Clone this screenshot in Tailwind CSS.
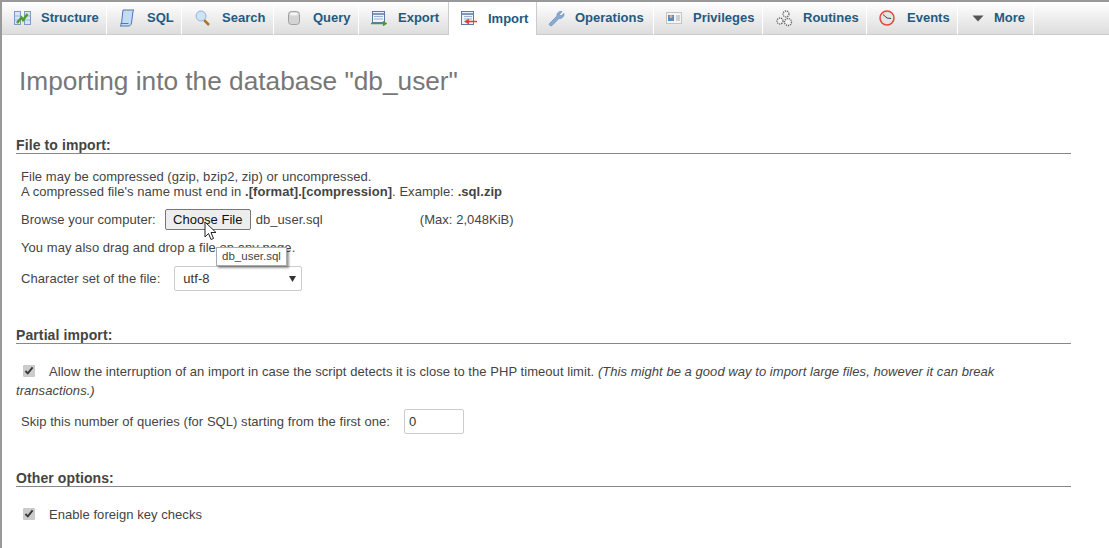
<!DOCTYPE html>
<html lang="en">
<head>
    <meta charset="UTF-8">
    <title>Import</title>
    <script src="https://cdn.jsdelivr.net/npm/@tailwindcss/browser@4"></script>
</head>
<body class="bg-white font-['Liberation_Sans',Arial,sans-serif] text-[13px] tracking-[0.05px] text-[#444] overflow-hidden">
<div class="relative h-[548px] w-[1109px] overflow-hidden border-t-2 border-l-2 border-[#999]">

    <!-- Tabs -->
    <nav class="flex h-[33px] bg-linear-to-b from-white to-[#dcdcdc] text-[13px] font-bold tracking-normal text-[#235a81]">
        <a class="flex w-[105px] items-center border-r border-b border-r-white border-b-[#ccc] pl-[12px]">
            <svg class="mr-[10px] shrink-0" width="17" height="16" viewBox="0 0 17 16"><rect x="0.500" y="1.500" width="6" height="13" fill="#d8e4f4" stroke="#7f9ac6"/><rect x="10.500" y="1.500" width="6" height="13" fill="#d8e4f4" stroke="#7f9ac6"/><path d="M1 6 H6 M1 10 H6 M11 6 H16 M11 10 H16" stroke="#9db4d8"/><path d="M3 13 L7.500 7.500 L9 10 L13.500 4" fill="none" stroke="#4f9a2d" stroke-width="2.400"/></svg>
            Structure
        </a>
        <a class="flex w-[75px] items-center border-r border-b border-r-white border-b-[#ccc] pl-[12px]">
            <svg class="mr-[12px] shrink-0" width="16" height="18" viewBox="0 0 16 18"><path d="M4 1 H15 C14.500 1.500 14 2 13.800 4 L12.500 14 C12 16 11 17 9 17 H1 C2 16 2.500 15 2.700 13 Z" fill="#c5dbf5" stroke="#4a78b8"/><path d="M1.500 14.500 H9.500" stroke="#4a78b8"/></svg>
            SQL
        </a>
        <a class="flex w-[92px] items-center border-r border-b border-r-white border-b-[#ccc] pl-[13px]">
            <svg class="mr-[12px] shrink-0" width="15" height="16" viewBox="0 0 15 16"><path d="M9 10 L14 15" stroke="#a8762c" stroke-width="2.500"/><circle cx="6" cy="6" r="5" fill="#cfe3f7" stroke="#94b4d4"/></svg>
            Search
        </a>
        <a class="flex w-[85px] items-center border-r border-b border-r-white border-b-[#ccc] pl-[14px]">
            <svg class="mr-[13px] shrink-0" width="12" height="14" viewBox="0 0 12 14"><rect x="0.500" y="0.500" width="11" height="13" rx="3" fill="#d4d4d4" stroke="#a0a0a0"/><ellipse cx="6" cy="3" rx="4" ry="1.500" fill="#f6f6f6"/></svg>
            Query
        </a>
        <a class="flex w-[90px] items-center border-r border-b border-r-[#ccc] border-b-[#ccc] pl-[12px]">
            <svg class="mr-[11px] shrink-0" width="16" height="15" viewBox="0 0 16 15"><rect x="1.500" y="0.500" width="12" height="11" fill="#eef3fa" stroke="#5a7ca8"/><path d="M2 3 H13" stroke="#5a7ca8" stroke-width="1.500"/><path d="M3 5.500 H12 M3 8 H12" stroke="#9ab2d0"/><path d="M0 12.500 H14 M12 10.500 L15 12.500 L12 14.500" fill="#4f9a2d" stroke="#4f9a2d" stroke-width="1.500"/></svg>
            Export
        </a>
        <a class="flex w-[88px] items-center border-r border-[#ccc] bg-white pl-[12px]">
            <svg class="mr-[11px] shrink-0" width="16" height="15" viewBox="0 0 16 15"><rect x="0.500" y="0.500" width="12" height="13" fill="#eef3fa" stroke="#5a7ca8"/><path d="M1 3 H12" stroke="#5a7ca8" stroke-width="1.500"/><path d="M3 5.500 H11 M3 8 H11" stroke="#9ab2d0"/><path d="M16 10.500 H6 M8 8.500 L4.500 10.500 L8 12.500" fill="#f4a0a0" stroke="#e0403c" stroke-width="1.500"/></svg>
            Import
        </a>
        <a class="flex w-[117px] items-center border-r border-b border-r-white border-b-[#ccc] pl-[11px]">
            <svg class="mr-[10px] shrink-0" width="17" height="17" viewBox="0 0 17 17"><path d="M1.500 13.500 L9 6 C8.500 3 11 1 14 1.500 L11.500 4.500 L13 6 L16 3.500 C16.500 6.500 13.500 9 11 8.500 L4 15.500 C2.500 16.500 0.500 15 1.500 13.500 Z" fill="#8aaad4" stroke="#6a8abc" stroke-width="0.700"/></svg>
            Operations
        </a>
        <a class="flex w-[109px] items-center border-r border-b border-r-white border-b-[#ccc] pl-[12px]">
            <svg class="mr-[11px] shrink-0" width="16" height="12" viewBox="0 0 16 12"><rect x="0.500" y="0.500" width="15" height="11" fill="#f4f4f4" stroke="#c4c4c4"/><rect x="2" y="3" width="6" height="6" fill="#5a8ac4"/><circle cx="5" cy="4.500" r="1.500" fill="#e8b088"/><path d="M10 4 H14 M10 6 H14 M10 8 H14" stroke="#aaa"/></svg>
            Privileges
        </a>
        <a class="flex w-[104px] items-center border-r border-b border-r-white border-b-[#ccc] pl-[12px]">
            <svg class="mr-[10px] shrink-0" width="18" height="17" viewBox="0 0 18 17" fill="#f4f4f4" stroke="#666" stroke-dasharray="1.300 0.800" stroke-width="1.300"><circle cx="11" cy="4" r="3"/><circle cx="5" cy="11" r="3"/><circle cx="13" cy="12" r="3.500"/></svg>
            Routines
        </a>
        <a class="flex w-[91px] items-center border-r border-b border-r-white border-b-[#ccc] pl-[12px]">
            <svg class="mr-[12px] shrink-0" width="16" height="16" viewBox="0 0 16 16"><circle cx="8" cy="8" r="7" fill="#e4e4e4" stroke="#e0483c" stroke-width="1.500"/><path d="M4 4.500 L8 8 L12 8.500" fill="none" stroke="#444"/></svg>
            Events
        </a>
        <a class="flex w-[76px] items-center border-r border-b border-r-white border-b-[#ccc] pl-[14px]">
            <svg class="mr-[10px] shrink-0" width="12" height="7" viewBox="0 0 12 7"><path d="M0.500 0.500 H11.500 L6 6.500 Z" fill="#555"/></svg>
            More
        </a>
        <div class="flex-1 border-b border-b-[#ccc]"></div>
    </nav>

    <!-- Page -->
    <div class="pr-[38px] pl-[14px]">
        <h2 class="mt-[31px] ml-[3px] text-[26.25px] leading-[30px] tracking-normal text-[#777]">Importing into the database "db_user"</h2>

        <!-- File to import -->
        <section class="mt-[42px]">
            <h3 class="h-[16px] border-b border-[#888] text-[14px] leading-[15px] font-bold tracking-[0.1px]">File to import:</h3>
            <div class="pl-[5px]">
                <p class="mt-[15px] leading-[15px]">File may be compressed (gzip, bzip2, zip) or uncompressed.<br>A compressed file's name must end in <b>.[format].[compression]</b>. Example: <b>.sql.zip</b></p>
                <div class="mt-[10px] flex h-[21px] items-center">
                    <span>Browse your computer:</span>
                    <button class="ml-[9px] h-[21px] w-[86px] rounded-[2px] border border-[#777] bg-[#ededed] text-[13px] tracking-normal text-[#111]">Choose File</button>
                    <span class="ml-[5px]">db_user.sql</span>
                    <span class="ml-[97px]">(Max: 2,048KiB)</span>
                </div>
                <p class="mt-[10px] leading-[15px]">You may also drag and drop a file on any page.</p>
                <div class="mt-[11px] flex h-[25px] items-center">
                    <span>Character set of the file:</span>
                    <div class="ml-[14px] flex h-[25px] w-[128px] items-center justify-between rounded-[2px] border border-[#ccc] pr-[5px] pl-[8px]">
                        <span class="text-[#333]">utf-8</span>
                        <svg width="7" height="6" viewBox="0 0 7 6"><path d="M0 0 H7 L3.500 6 Z" fill="#333"/></svg>
                    </div>
                </div>
            </div>
        </section>

        <!-- Partial import -->
        <section class="mt-[37px]">
            <h3 class="h-[16px] border-b border-[#888] text-[14px] leading-[15px] font-bold tracking-[0.1px]">Partial import:</h3>
            <p class="mt-[18px] leading-[19px]">
                <input type="checkbox" checked class="mr-[14px] ml-[7px] h-[12px] w-[12px] accent-[#ccc] align-[-1px]">Allow the interruption of an import in case the script detects it is close to the PHP timeout limit. <i>(This might be a good way to import large files, however it can break transactions.)</i>
            </p>
            <div class="mt-[9px] flex h-[25px] items-center pl-[5px]">
                <span>Skip this number of queries (for SQL) starting from the first one:</span>
                <div class="ml-[14px] flex h-[25px] w-[60px] items-center rounded-[2px] border border-[#ccc] pl-[4px] text-[#333]">0</div>
            </div>
        </section>

        <!-- Other options -->
        <section class="mt-[37px]">
            <h3 class="h-[16px] border-b border-[#888] text-[14px] leading-[15px] font-bold tracking-[0.1px]">Other options:</h3>
            <p class="mt-[18px] leading-[19px]">
                <input type="checkbox" checked class="mr-[14px] ml-[7px] h-[12px] w-[12px] accent-[#ccc] align-[-1px]">Enable foreign key checks
            </p>
        </section>
    </div>

    <!-- Tooltip over the drag and drop line -->
    <div class="absolute top-[245px] left-[214px] flex h-[19px] w-[71px] items-center justify-center border border-[#aaa] bg-white text-[11.5px] tracking-normal shadow-[2px_2px_2px_rgba(0,0,0,0.4)]">db_user.sql</div>

    <!-- Mouse cursor -->
    <svg class="absolute top-[219px] left-[202px]" width="13" height="20" viewBox="0 0 13 20"><path d="M1 1 V16 L4.500 12.500 L7 18.500 L9.500 17.500 L7 11.500 H12 Z" fill="#fff" stroke="#222"/></svg>
</div>
</body>
</html>
